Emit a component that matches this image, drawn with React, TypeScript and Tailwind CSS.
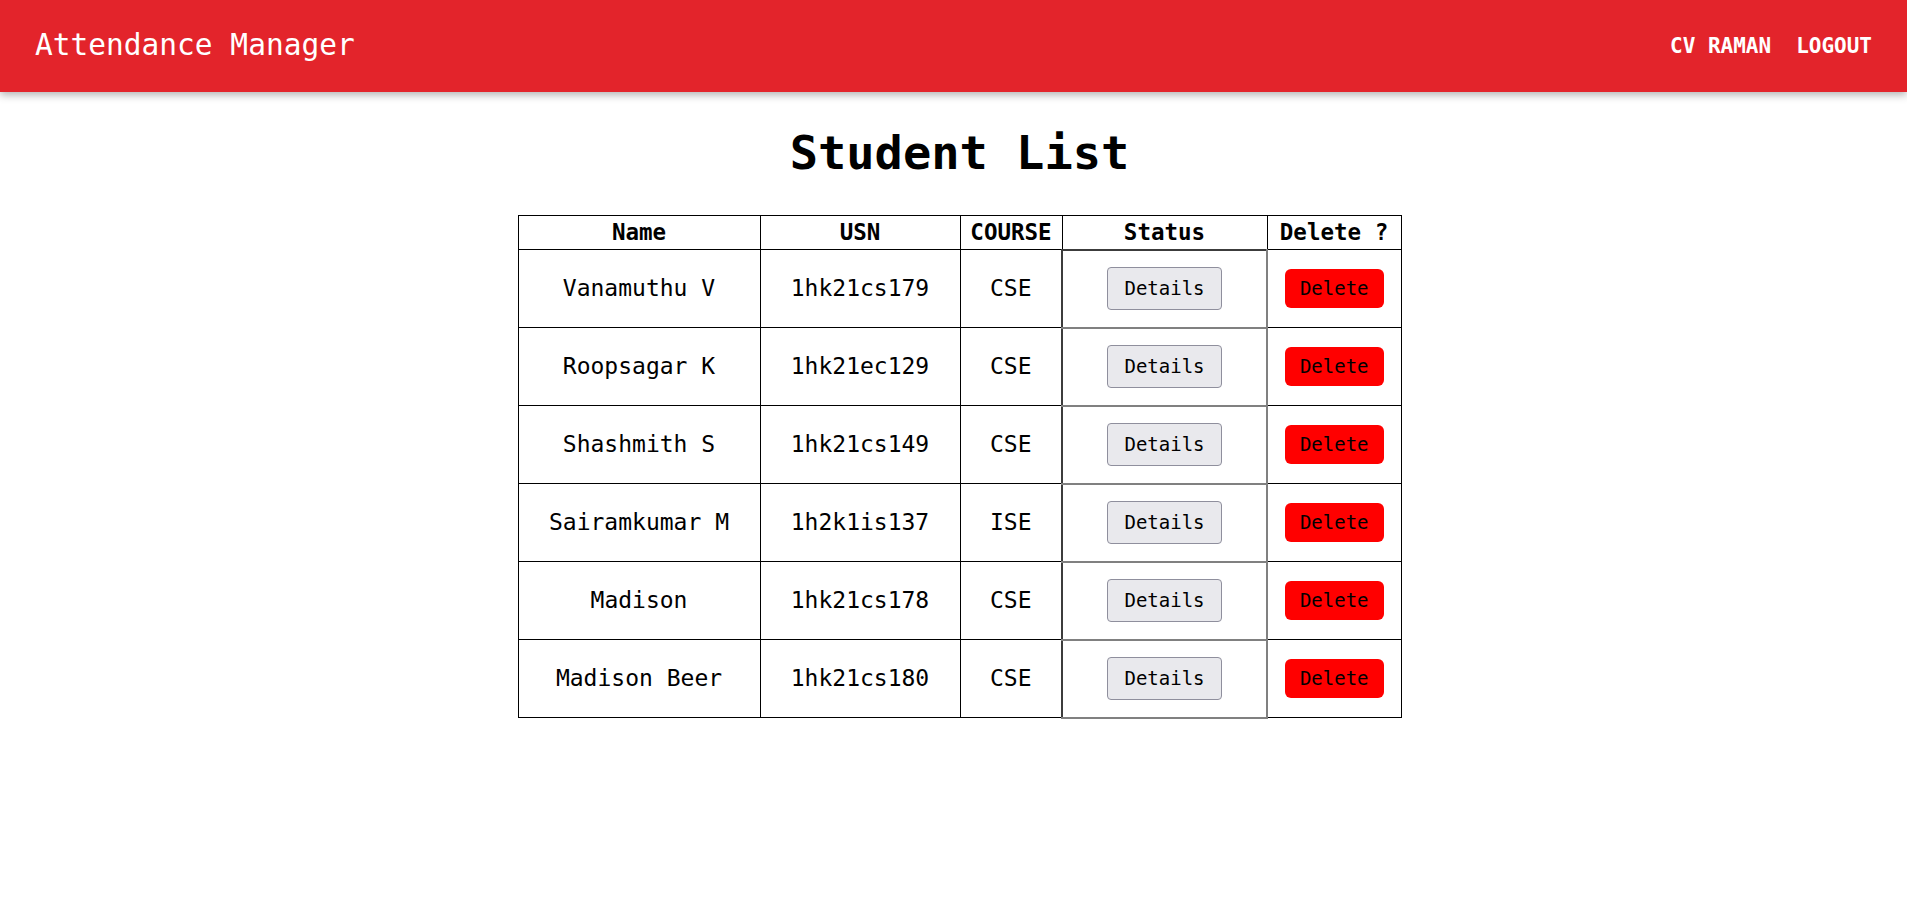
import React from "react";

const students = [
  { name: "Vanamuthu V", usn: "1hk21cs179", course: "CSE" },
  { name: "Roopsagar K", usn: "1hk21ec129", course: "CSE" },
  { name: "Shashmith S", usn: "1hk21cs149", course: "CSE" },
  { name: "Sairamkumar M", usn: "1h2k1is137", course: "ISE" },
  { name: "Madison", usn: "1hk21cs178", course: "CSE" },
  { name: "Madison Beer", usn: "1hk21cs180", course: "CSE" },
];

export default function App() {
  return (
    <div
      className="min-h-screen bg-white text-black"
      style={{ fontFamily: '"DejaVu Sans Mono", "Liberation Mono", monospace' }}
    >
      <header className="flex h-[92px] items-center justify-between bg-[#e3242b] pl-[35px] pr-[35px] shadow-[0_3px_8px_rgba(0,0,0,0.3)]">
        <div className="text-[29.5px] leading-none text-white">Attendance Manager</div>
        <nav className="flex items-center gap-[25px] text-[21px] font-bold leading-none text-white">
          <span>CV RAMAN</span>
          <span>LOGOUT</span>
        </nav>
      </header>

      <main className="flex flex-col items-center pl-[12px]">
        <h1 className="mt-[30px] h-[62px] text-[47px] font-bold leading-[62px]">Student List</h1>
        <table className="mt-[31px] w-[883px] table-fixed border-collapse">
          <colgroup>
            <col className="w-[242px]" />
            <col className="w-[200px]" />
            <col className="w-[102px]" />
            <col className="w-[205px]" />
            <col className="w-[134px]" />
          </colgroup>
          <thead>
            <tr className="h-[34px]">
              <th className="border border-black p-0 text-center text-[22.5px] font-bold leading-none">Name</th>
              <th className="border border-black p-0 text-center text-[22.5px] font-bold leading-none">USN</th>
              <th className="border border-black p-0 text-center text-[22.5px] font-bold leading-none">COURSE</th>
              <th className="border border-black p-0 text-center text-[22.5px] font-bold leading-none">Status</th>
              <th className="border border-black p-0 text-center text-[22.5px] font-bold leading-none">Delete ?</th>
            </tr>
          </thead>
          <tbody>
            {students.map((s) => (
              <tr key={s.usn} className="h-[78px]">
                <td className="border border-black p-0 text-center text-[23px] leading-none">{s.name}</td>
                <td className="border border-black p-0 text-center text-[23px] leading-none">{s.usn}</td>
                <td className="border border-black p-0 text-center text-[23px] leading-none">{s.course}</td>
                <td className="border-2 border-b-[#808080] border-l-[#3c3c3c] border-r-[#808080] border-t-[#3c3c3c] p-0 text-center">
                  <button className="h-[43px] rounded-[4px] border border-[#8f8f9d] bg-[#e9e9ed] px-4 text-[19px] leading-none text-black">
                    Details
                  </button>
                </td>
                <td className="border border-black p-0 text-center">
                  <button className="h-[39px] w-[99px] rounded-[6px] bg-[#ff0000] text-[19px] leading-none text-black">
                    Delete
                  </button>
                </td>
              </tr>
            ))}
          </tbody>
        </table>
      </main>
    </div>
  );
}
